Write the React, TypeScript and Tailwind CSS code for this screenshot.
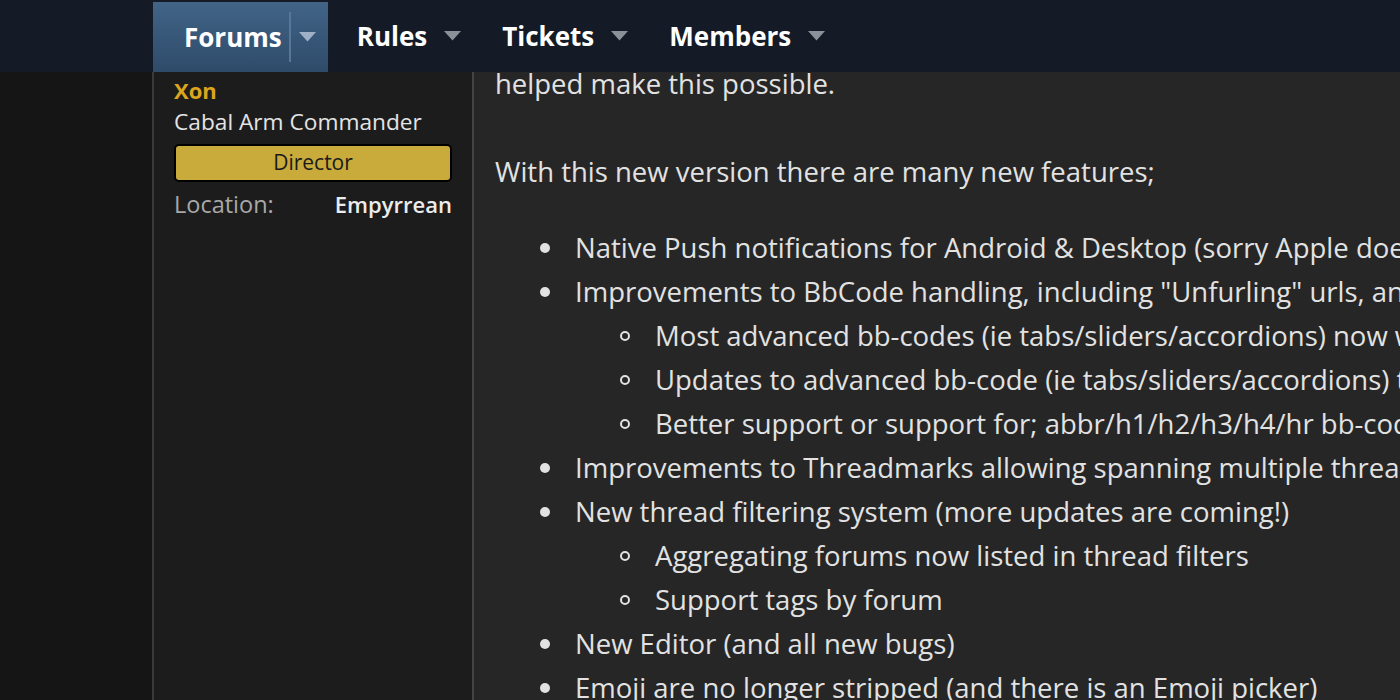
import React from 'react';

const font = { fontFamily: '"Open Sans", "Noto Sans", sans-serif' };

function Caret({ className }: { className: string }) {
  return (
    <svg width="17" height="10" viewBox="0 0 17 10" className={className}>
      <path d="M0 0 H17 L8.5 9.5 Z" fill="currentColor" />
    </svg>
  );
}

function NavTab({ label, active }: { label: string; active?: boolean }) {
  if (active) {
    return (
      <div className="mt-[2px] flex h-[70px] items-center bg-gradient-to-b from-[#416487] to-[#2f4b6a] pl-[31px] pr-[12px]">
        <span className="text-[26px] font-bold text-white">{label}</span>
        <span className="ml-[7px] h-[50px] w-[2px] bg-[#58769a]" />
        <Caret className="ml-[8px] text-[#9fb1c6]" />
      </div>
    );
  }
  return (
    <div className="flex h-[72px] items-center pl-[29px] pr-[12px]">
      <span className="text-[26px] font-bold text-white">{label}</span>
      <Caret className="ml-[17px] text-[#8b9099]" />
    </div>
  );
}

const list = [
  { text: 'Native Push notifications for Android & Desktop (sorry Apple doesn\'t support web push notifications)' },
  {
    text: 'Improvements to BbCode handling, including "Unfurling" urls, and better handling of nested bb-codes',
    sub: [
      'Most advanced bb-codes (ie tabs/sliders/accordions) now work in signatures',
      'Updates to advanced bb-code (ie tabs/sliders/accordions) to be more mobile friendly',
      'Better support or support for; abbr/h1/h2/h3/h4/hr bb-codes',
    ],
  },
  { text: 'Improvements to Threadmarks allowing spanning multiple threads' },
  {
    text: 'New thread filtering system (more updates are coming!)',
    sub: ['Aggregating forums now listed in thread filters', 'Support tags by forum'],
  },
  { text: 'New Editor (and all new bugs)' },
  { text: 'Emoji are no longer stripped (and there is an Emoji picker)' },
];

export default function App() {
  return (
    <div className="relative h-[700px] w-[1400px] overflow-hidden bg-[#151515]" style={font}>
      <header className="absolute inset-x-0 top-0 z-10 flex h-[72px] bg-[#141b27] pl-[153px]">
        <NavTab label="Forums" active />
        <NavTab label="Rules" />
        <NavTab label="Tickets" />
        <NavTab label="Members" />
      </header>

      <div className="flex h-full pl-[152px]">
        <aside className="w-[322px] shrink-0 border-l-2 border-r-2 border-l-[#3a3a3a] border-r-[#444444] bg-[#1c1c1c] px-[20px] pt-[74px]">
          <div className="text-[22px] font-bold leading-[32px] text-[#dca51c]">Xon</div>
          <div className="text-[22.7px] leading-[32px] text-[#e4e4e4]">Cabal Arm Commander</div>
          <div className="mt-[6px] flex h-[38px] items-center justify-center rounded-[5px] border-2 border-black bg-[#c8ab3a] text-[21px] text-[#1a1a1a]">
            Director
          </div>
          <div className="mt-[6px] flex items-center justify-between leading-[32px]">
            <span className="text-[23.5px] text-[#a8a8a8]">Location:</span>
            <span className="text-[22px] font-semibold text-[#ececec]">Empyrrean</span>
          </div>
        </aside>

        <main className="min-w-0 flex-1 overflow-hidden whitespace-nowrap bg-[#262626] pl-[21px] pt-[62px] text-[27.5px] leading-[44px] text-[#e2e2e2]">
          <p>helped make this possible.</p>
          <p className="mt-[44px]">With this new version there are many new features;</p>
          <ul className="mt-[32px] pl-[45px]">
            {list.map((item) => (
              <li key={item.text}>
                <div className="flex items-center">
                  <span className="mr-[25px] h-[10px] w-[10px] shrink-0 rounded-full bg-[#e2e2e2]" />
                  <span>{item.text}</span>
                </div>
                {item.sub && (
                  <ul className="pl-[80px]">
                    {item.sub.map((s) => (
                      <li key={s} className="flex items-center">
                        <span className="mr-[25px] h-[10px] w-[10px] shrink-0 rounded-full border-2 border-[#e2e2e2]" />
                        <span>{s}</span>
                      </li>
                    ))}
                  </ul>
                )}
              </li>
            ))}
          </ul>
        </main>
      </div>
    </div>
  );
}
